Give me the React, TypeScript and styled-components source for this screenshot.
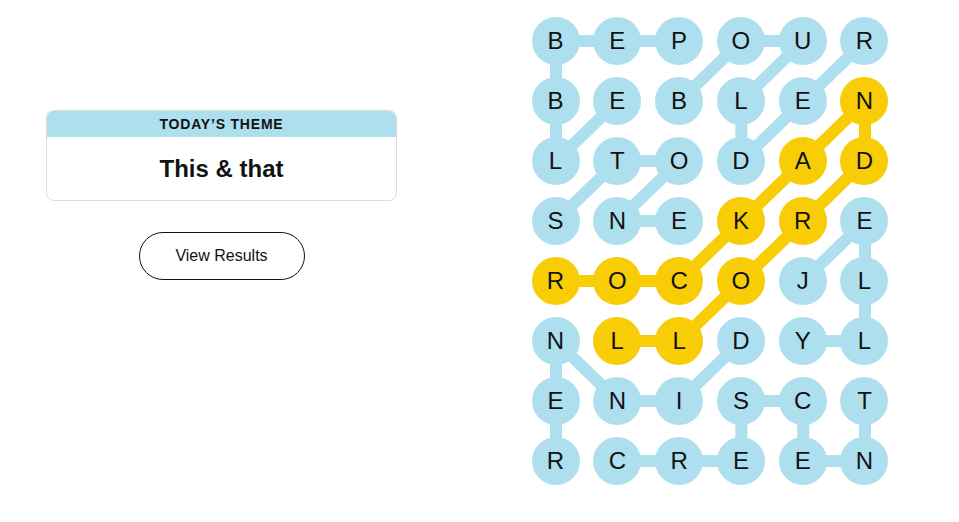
import React from "react";
import styled, { createGlobalStyle } from "styled-components";

const GlobalStyle = createGlobalStyle`
  html, body { margin: 0; padding: 0; background: #ffffff; }
  body { font-family: "Liberation Sans", Arial, sans-serif; color: #121212; }
`;

const BLUE = "#aedfee";
const YELLOW = "#f8cd05";

const COLS = 6;
const ROWS = 8;
const CELL = 48;
const COL_GAP = 13.8;
const ROW_GAP = 12;

const letters = [
  "BEPOUR",
  "BEBLEN",
  "LTODAD",
  "SNEKRE",
  "ROCOJL",
  "NLLDYL",
  "ENISCT",
  "RCREEN",
];

type Cell = [number, number];
type Word = { path: Cell[]; spangram?: boolean };

const words: Word[] = [
  { path: [[0, 2], [0, 1], [0, 0], [1, 0], [2, 0], [1, 1]] },
  { path: [[1, 2], [0, 3], [0, 4], [1, 3], [2, 3], [1, 4], [0, 5]] },
  { path: [[3, 0], [2, 1], [2, 2], [3, 1], [3, 2]] },
  { path: [[4, 4], [3, 5], [4, 5], [5, 5], [5, 4]] },
  { path: [[5, 3], [6, 2], [6, 1], [5, 0], [6, 0], [7, 0]] },
  { path: [[7, 1], [7, 2], [7, 3], [6, 3], [6, 4], [7, 4], [7, 5], [6, 5]] },
  {
    spangram: true,
    path: [[4, 0], [4, 1], [4, 2], [3, 3], [2, 4], [1, 5], [2, 5], [3, 4], [4, 3], [5, 2], [5, 1]],
  },
];

const spanSet = new Set(
  words.filter((w) => w.spangram).flatMap((w) => w.path.map(([r, c]) => `${r}-${c}`))
);

const cx = (c: number) => c * (CELL + COL_GAP) + CELL / 2;
const cy = (r: number) => r * (CELL + ROW_GAP) + CELL / 2;

const Page = styled.main`
  display: flex;
  align-items: flex-start;
  padding: 17px 0 0 46px;
  gap: 134px;
`;

const LeftColumn = styled.section`
  width: 351px;
  padding-top: 93px;
  display: flex;
  flex-direction: column;
  align-items: center;
  gap: 31px;
`;

const ThemeCard = styled.div`
  width: 100%;
  box-sizing: border-box;
  border: 1px solid #dcdcdc;
  border-radius: 8px;
  overflow: hidden;
  display: flex;
  flex-direction: column;
`;

const ThemeHeader = styled.div`
  background: ${BLUE};
  height: 26px;
  display: flex;
  align-items: center;
  justify-content: center;
  font-size: 14px;
  font-weight: 700;
  letter-spacing: 0.8px;
  text-transform: uppercase;
  color: #121212;
`;

const ThemeBody = styled.div`
  height: 63px;
  display: flex;
  align-items: center;
  justify-content: center;
  font-size: 24px;
  font-weight: 700;
  color: #121212;
`;

const ResultsButton = styled.button`
  width: 166px;
  height: 48px;
  border: 1px solid #121212;
  border-radius: 24px;
  background: #ffffff;
  font-family: "Liberation Sans", Arial, sans-serif;
  font-size: 16px;
  color: #121212;
  padding: 0;
  cursor: pointer;
`;

const Board = styled.div`
  position: relative;
  margin-left: 0.5px;
  display: grid;
  grid-template-columns: repeat(${COLS}, ${CELL}px);
  grid-template-rows: repeat(${ROWS}, ${CELL}px);
  column-gap: ${COL_GAP}px;
  row-gap: ${ROW_GAP}px;
`;

const Connections = styled.svg`
  position: absolute;
  left: 0;
  top: 0;
  width: 100%;
  height: 100%;
  pointer-events: none;
  z-index: 0;
`;

const Letter = styled.div<{ $span: boolean }>`
  position: relative;
  z-index: 1;
  width: ${CELL}px;
  height: ${CELL}px;
  border-radius: 50%;
  background: ${(p) => (p.$span ? YELLOW : BLUE)};
  display: flex;
  align-items: center;
  justify-content: center;
  font-size: 24px;
  font-weight: 400;
  color: #121212;
`;

export default function App() {
  const boardW = COLS * CELL + (COLS - 1) * COL_GAP;
  const boardH = ROWS * CELL + (ROWS - 1) * ROW_GAP;
  return (
    <>
      <GlobalStyle />
      <Page>
        <LeftColumn>
          <ThemeCard>
            <ThemeHeader>Today’s Theme</ThemeHeader>
            <ThemeBody>This &amp; that</ThemeBody>
          </ThemeCard>
          <ResultsButton>View Results</ResultsButton>
        </LeftColumn>
        <Board>
          <Connections viewBox={`0 0 ${boardW} ${boardH}`}>
            {words.map((w, wi) =>
              w.path.slice(1).map(([r, c], i) => {
                const [pr, pc] = w.path[i];
                return (
                  <line
                    key={`${wi}-${i}`}
                    x1={cx(pc)}
                    y1={cy(pr)}
                    x2={cx(c)}
                    y2={cy(r)}
                    stroke={w.spangram ? YELLOW : BLUE}
                    strokeWidth={12}
                  />
                );
              })
            )}
          </Connections>
          {letters.map((row, r) =>
            row.split("").map((ch, c) => (
              <Letter key={`${r}-${c}`} $span={spanSet.has(`${r}-${c}`)}>
                {ch}
              </Letter>
            ))
          )}
        </Board>
      </Page>
    </>
  );
}
